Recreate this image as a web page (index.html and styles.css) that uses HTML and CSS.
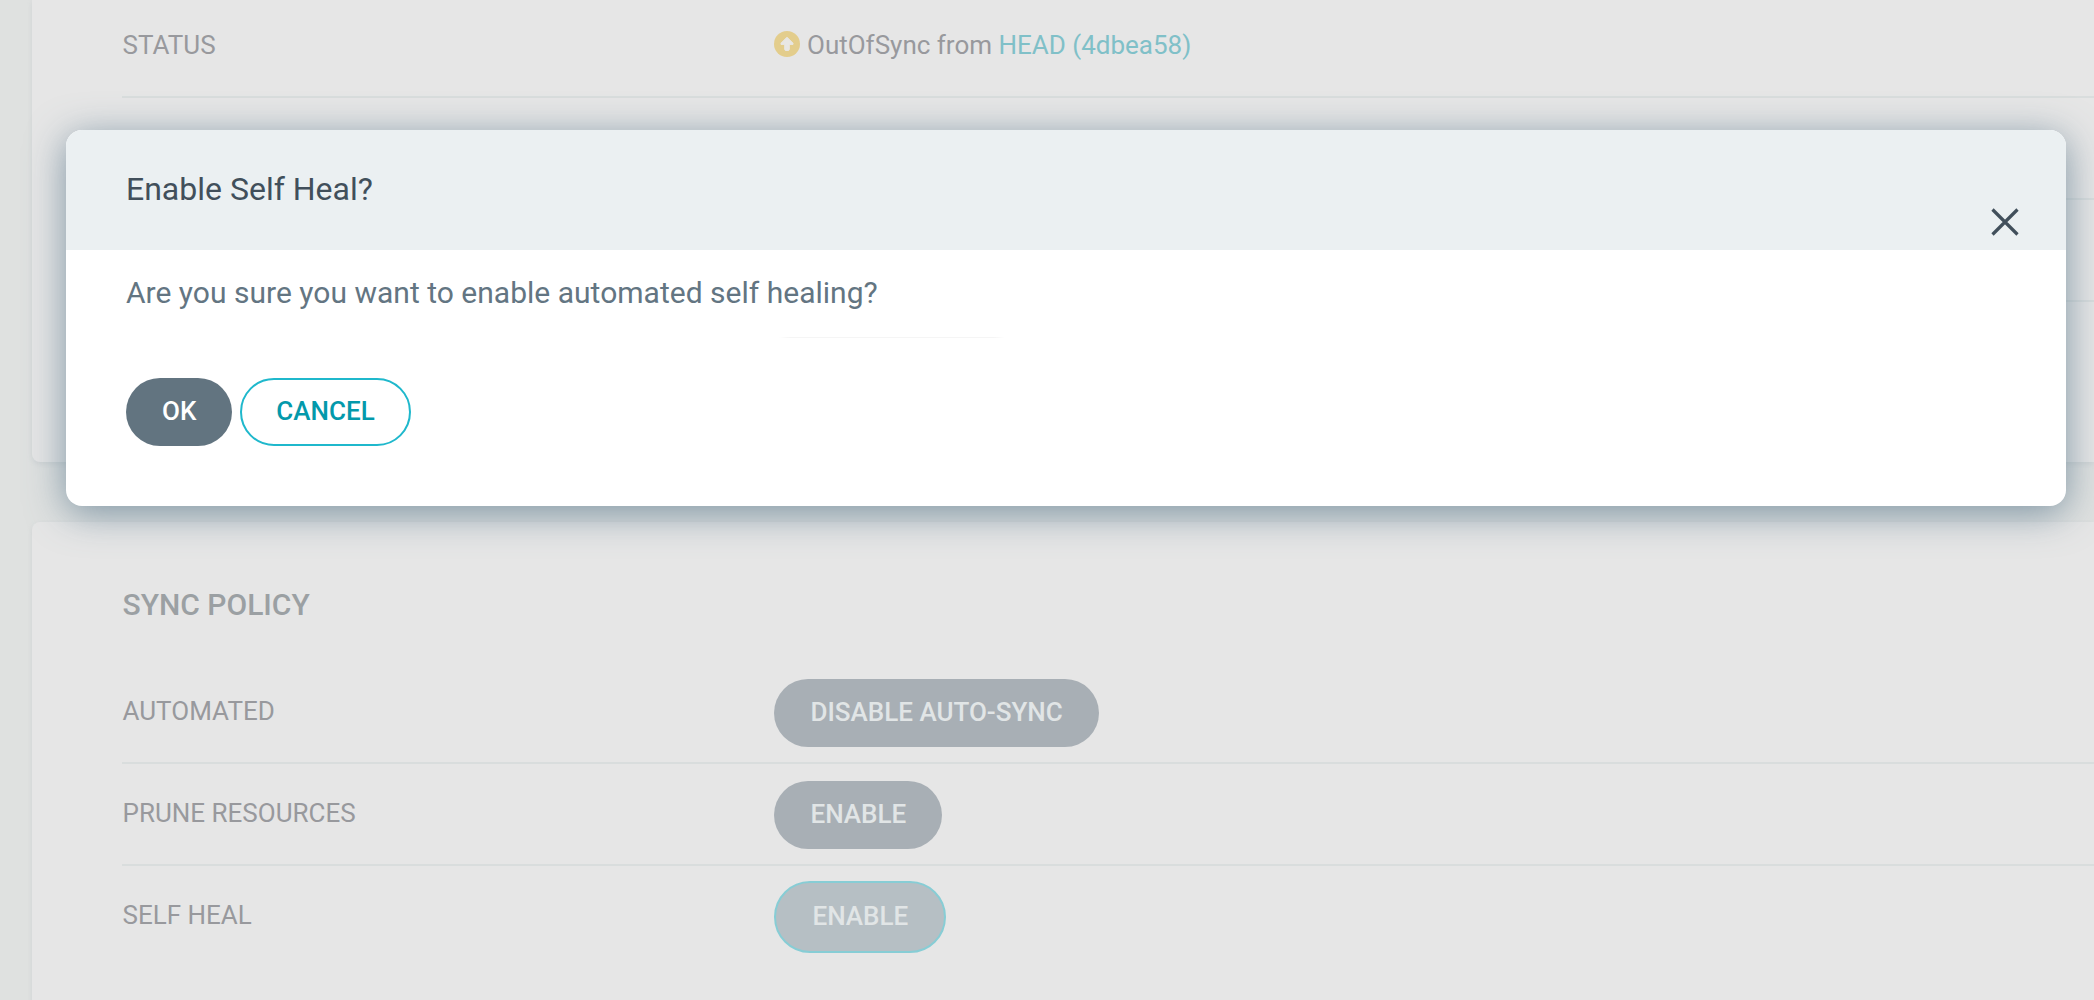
FILE: index.html
```html
<!DOCTYPE html>
<html lang="en">
<head>
<meta charset="utf-8">
<title>Application details</title>
<link rel="stylesheet" href="styles.css">
</head>
<body>
<main class="page">
  <section class="card card--summary">
    <div class="row">
      <div class="row__label">STATUS</div>
      <div class="row__value">
        <svg class="sync-icon" viewBox="0 0 26 26" aria-hidden="true">
          <circle cx="13" cy="13" r="13" fill="#e3cd8c"/>
          <path d="M13 6.2 L19 12.2 V13.4 H15.3 V18.2 Q15.3 19.5 14 19.5 H12 Q10.7 19.5 10.7 18.2 V13.4 H7 V12.2 Z" fill="#e8e7e4" stroke="#e8e7e4" stroke-width="1" stroke-linejoin="round"/>
        </svg>
        <span>OutOfSync from <a class="revision">HEAD (4dbea58)</a></span>
      </div>
    </div>
    <div class="row"></div>
    <div class="row"></div>
  </section>

  <section class="card card--policy">
    <h2 class="card__title">SYNC POLICY</h2>
    <div class="row">
      <div class="row__label">AUTOMATED</div>
      <div class="row__value"><button class="pill">DISABLE AUTO-SYNC</button></div>
    </div>
    <div class="row">
      <div class="row__label">PRUNE RESOURCES</div>
      <div class="row__value"><button class="pill">ENABLE</button></div>
    </div>
    <div class="row row--last">
      <div class="row__label">SELF HEAL</div>
      <div class="row__value"><button class="pill pill--focused">ENABLE</button></div>
    </div>
  </section>
</main>

<div class="modal" role="dialog" aria-modal="true">
  <header class="modal__header">
    <h1 class="modal__title">Enable Self Heal?</h1>
    <svg class="modal__close" viewBox="0 0 28 28" aria-hidden="true">
      <path d="M1.5 1.5 L26.5 26.5 M26.5 1.5 L1.5 26.5" stroke="#414f5b" stroke-width="3.2" fill="none"/>
    </svg>
  </header>
  <div class="modal__body">
    <p class="modal__text">Are you sure you want to enable automated self healing?</p>
    <div class="modal__divider"></div>
    <div class="modal__actions">
      <button class="btn btn--primary">OK</button>
      <button class="btn btn--outline">CANCEL</button>
    </div>
  </div>
</div>
</body>
</html>
```
FILE: styles.css
```css
* {
  box-sizing: border-box;
}

body {
  margin: 0;
  height: 1000px;
  overflow: hidden;
  background: #dfe1e0;
  font-family: Roboto, "Liberation Sans", sans-serif;
  font-size: 26px;
  color: #98999d;
}

button {
  font: inherit;
}

.page {
  display: flex;
  flex-direction: column;
  gap: 60px;
  height: 1000px;
  padding-left: 32px;
  overflow: hidden;
}

.card {
  flex: none;
  padding-left: 90px;
  background: #e6e6e6;
  box-shadow: 0 2px 5px rgba(150, 160, 170, 0.2);
}

.card--summary {
  height: 462px;
  border-radius: 0 0 0 8px;
}

.card--summary .row:first-child {
  height: 98px;
}

.card--policy {
  height: 500px;
  padding-top: 66px;
  border-radius: 8px 0 0 0;
}

.card__title {
  margin: 0 0 40px;
  padding-left: 0.5px;
  font-size: 30px;
  font-weight: 500;
  line-height: 34px;
  color: #9ba0a3;
}

.row {
  display: grid;
  grid-template-columns: 652px 1fr;
  align-items: center;
  height: 102px;
  border-bottom: 2px solid #d9dddd;
}

.row--last {
  border-bottom-color: transparent;
}

.row__label {
  padding-left: 0.5px;
  padding-bottom: 2px;
}

.row__value {
  display: flex;
  align-items: center;
  padding-top: 2px;
}

.card--summary .row__label,
.card--summary .row__value {
  padding-top: 0;
  padding-bottom: 6px;
}

.sync-icon {
  width: 26px;
  height: 26px;
  margin: -2px 7px 0 0;
}

.revision {
  color: #80c0c8;
}

.pill {
  height: 68px;
  padding: 0 36px 2px 36.5px;
  border: 0;
  border-radius: 34px;
  background: #a8afb5;
  color: #e1e5e6;
  font-weight: 500;
}

.pill--focused {
  height: 72px;
  border: 2px solid #87cdd5;
  border-radius: 36px;
  background: #b6bfc4;
}

.modal {
  position: absolute;
  left: 66px;
  top: 130px;
  width: 2000px;
  height: 376px;
  border-radius: 16px;
  background: #fff;
  box-shadow: 0 7px 38px rgba(97, 125, 145, 0.78);
}

.modal__header {
  display: flex;
  justify-content: space-between;
  height: 120px;
  padding: 40px 47px 0 60px;
  border-radius: 16px 16px 0 0;
  background: #ebf0f2;
}

.modal__title {
  margin: 0;
  font-size: 32px;
  font-weight: 400;
  line-height: 38px;
  color: #414f5b;
}

.modal__close {
  width: 28px;
  height: 28px;
  margin-top: 38px;
}

.modal__body {
  padding: 25px 60px 0;
}

.modal__text {
  margin: 0;
  font-size: 30px;
  line-height: 36px;
  letter-spacing: 0.015px;
  color: #637582;
}

.modal__divider {
  width: 226px;
  height: 1px;
  margin: 26px 0 40px 653px;
  background: linear-gradient(90deg, #fff, #f5f5f5 5%, #f5f5f5 95%, #fff);
}

.modal__actions {
  display: flex;
  gap: 8px;
}

.btn {
  height: 68px;
  border-radius: 34px;
  font-weight: 500;
}

.btn--primary {
  padding: 0 36px 2px;
  border: 0;
  background: #627480;
  color: #fff;
}

.btn--outline {
  padding: 0 34px 2px;
  border: 2px solid #1fb8cc;
  background: #fff;
  color: #0399ab;
}
```
